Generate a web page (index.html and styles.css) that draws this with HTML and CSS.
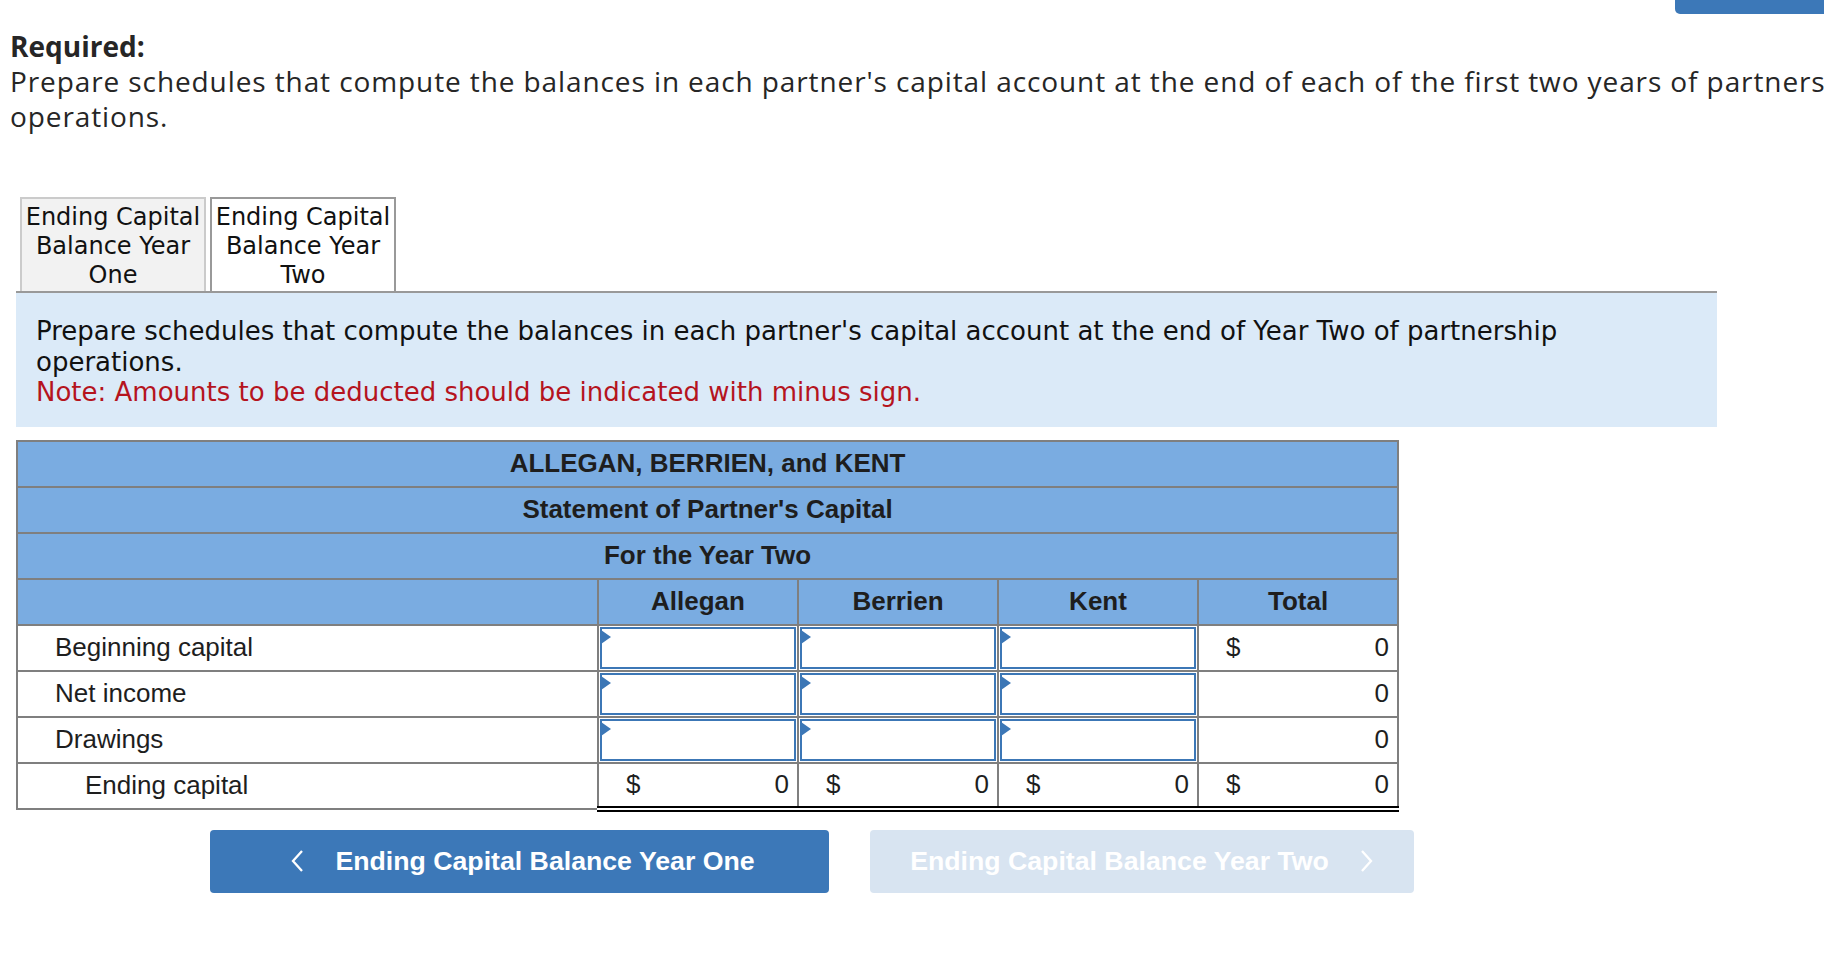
FILE: index.html
```html
<!DOCTYPE html>
<html lang="en">
<head>
<meta charset="utf-8">
<title>Ending Capital Balance Year Two</title>
<link rel="stylesheet" href="styles.css">
</head>
<body>
<div class="page">
  <div class="topbar"><div class="topbtn"></div></div>

  <div class="prompt">
    <div class="prompt-title">Required:</div>
    <div class="prompt-text">Prepare schedules that compute the balances in each partner's capital account at the end of each of the first two years of partnership operations.</div>
  </div>

  <div class="tabs">
    <div class="tab tab-inactive">Ending Capital Balance Year One</div>
    <div class="tab tab-active">Ending Capital Balance Year Two</div>
  </div>

  <div class="instructions">
    <div>Prepare schedules that compute the balances in each partner's capital account at the end of Year Two of partnership operations.</div>
    <div class="note">Note: Amounts to be deducted should be indicated with minus sign.</div>
  </div>

  <table class="sheet">
    <colgroup>
      <col class="c-label"><col class="c-val"><col class="c-val"><col class="c-val"><col class="c-val">
    </colgroup>
    <tr class="head"><td colspan="5">ALLEGAN, BERRIEN, and KENT</td></tr>
    <tr class="head"><td colspan="5">Statement of Partner's Capital</td></tr>
    <tr class="head"><td colspan="5">For the Year Two</td></tr>
    <tr class="head cols"><td></td><td>Allegan</td><td>Berrien</td><td>Kent</td><td>Total</td></tr>
    <tr>
      <td class="label">Beginning capital</td>
      <td class="in"><div class="input"></div></td>
      <td class="in"><div class="input"></div></td>
      <td class="in"><div class="input"></div></td>
      <td class="val"><div class="amt"><span>$</span><span>0</span></div></td>
    </tr>
    <tr>
      <td class="label">Net income</td>
      <td class="in"><div class="input"></div></td>
      <td class="in"><div class="input"></div></td>
      <td class="in"><div class="input"></div></td>
      <td class="val"><div class="amt"><span></span><span>0</span></div></td>
    </tr>
    <tr>
      <td class="label">Drawings</td>
      <td class="in"><div class="input"></div></td>
      <td class="in"><div class="input"></div></td>
      <td class="in"><div class="input"></div></td>
      <td class="val"><div class="amt"><span></span><span>0</span></div></td>
    </tr>
    <tr class="total">
      <td class="label label-total">Ending capital</td>
      <td class="val"><div class="amt"><span>$</span><span>0</span></div></td>
      <td class="val"><div class="amt"><span>$</span><span>0</span></div></td>
      <td class="val"><div class="amt"><span>$</span><span>0</span></div></td>
      <td class="val"><div class="amt"><span>$</span><span>0</span></div></td>
    </tr>
  </table>

  <div class="navbtns">
    <div class="navbtn prev">
      <svg class="chev" width="15" height="24" viewBox="0 0 15 24"><polyline points="12,2 3,12 12,22" fill="none" stroke="#fff" stroke-width="2.3"/></svg>
      <span>Ending Capital Balance Year One</span>
    </div>
    <div class="navbtn next">
      <span>Ending Capital Balance Year Two</span>
      <svg class="chev" width="15" height="24" viewBox="0 0 15 24"><polyline points="3,2 12,12 3,22" fill="none" stroke="#fff" stroke-width="2.3"/></svg>
    </div>
  </div>
</div>
</body>
</html>
```

FILE: styles.css
```css
html, body {
  margin: 0;
  padding: 0;
  background: #fff;
  overflow: hidden;
}

.page {
  width: 1824px;
  height: 972px;
  overflow: hidden;
  position: relative;
}

.topbar {
  height: 14px;
  display: flex;
  justify-content: flex-end;
}

.topbtn {
  width: 149px;
  height: 14px;
  background: #3c78b8;
  border-bottom-left-radius: 5px;
}

.prompt {
  margin-top: 15px;
  padding-left: 10px;
  width: 2010px;
  font-family: "Open Sans", Lato, sans-serif;
  font-size: 28px;
  letter-spacing: 0.9px;
  line-height: 35px;
  color: #262626;
}

.prompt-title {
  font-weight: 700;
  letter-spacing: 0;
}

.tabs {
  margin-top: 63px;
  margin-left: 16px;
  width: 1701px;
  padding-left: 4px;
  box-sizing: border-box;
  display: flex;
  gap: 4px;
  border-bottom: 2px solid #999;
}

.tab {
  width: 186px;
  height: 94px;
  box-sizing: border-box;
  padding-top: 4px;
  text-align: center;
  font-family: "DejaVu Sans", Verdana, sans-serif;
  font-size: 24px;
  line-height: 29px;
  color: #111;
}

.tab-inactive {
  background: #f2f2f2;
  border: 2px solid #cbcbcb;
  border-bottom: none;
}

.tab-active {
  background: #fff;
  border: 2px solid #999;
  border-bottom: none;
}

.instructions {
  margin-left: 16px;
  width: 1701px;
  box-sizing: border-box;
  background: #dbeaf8;
  padding: 23px 20px 19px 20px;
  font-family: "DejaVu Sans", Verdana, sans-serif;
  font-size: 26px;
  line-height: 30.5px;
  color: #111;
}

.note {
  color: #b5141e;
}

.sheet {
  margin-top: 13px;
  margin-left: 16px;
  width: 1381px;
  border-collapse: collapse;
  table-layout: fixed;
  font-family: "Liberation Sans", Arial, sans-serif;
  font-size: 26px;
  color: #1e1e1e;
}

.c-label { width: 581px; }
.c-val { width: 200px; }

.sheet td {
  border: 2px solid #7f7f7f;
  height: 46px;
  padding: 0;
  box-sizing: border-box;
}

.head td {
  background: #7aace1;
  font-weight: 700;
  text-align: center;
}

.label {
  padding-left: 37px !important;
}

.label-total {
  padding-left: 67px !important;
}

.in {
  padding: 1px !important;
}

.input {
  position: relative;
  height: 42px;
  border: 2px solid #3c77b6;
  box-sizing: border-box;
  background: #fff;
}

.input::before {
  content: "";
  position: absolute;
  left: -1px;
  top: 1px;
  border-left: 10px solid #3c77b6;
  border-top: 7px solid transparent;
  border-bottom: 7px solid transparent;
}

.amt {
  display: flex;
  justify-content: space-between;
  padding: 0 8px 0 27px;
}

.total .val {
  border-top: 2px solid #000;
  border-bottom: 6px double #000;
}

.navbtns {
  margin-top: 18px;
  margin-left: 210px;
  display: flex;
  gap: 41px;
}

.navbtn {
  height: 63px;
  border-radius: 4px;
  display: flex;
  align-items: center;
  justify-content: center;
  gap: 30px;
  font-family: "Liberation Sans", Arial, sans-serif;
  font-weight: 700;
  font-size: 26.7px;
  color: #fff;
}

.prev {
  width: 619px;
  background: #3c78b8;
  padding-left: 6px;
  box-sizing: border-box;
}

.next {
  width: 544px;
  background: #d8e4f1;
}
```
